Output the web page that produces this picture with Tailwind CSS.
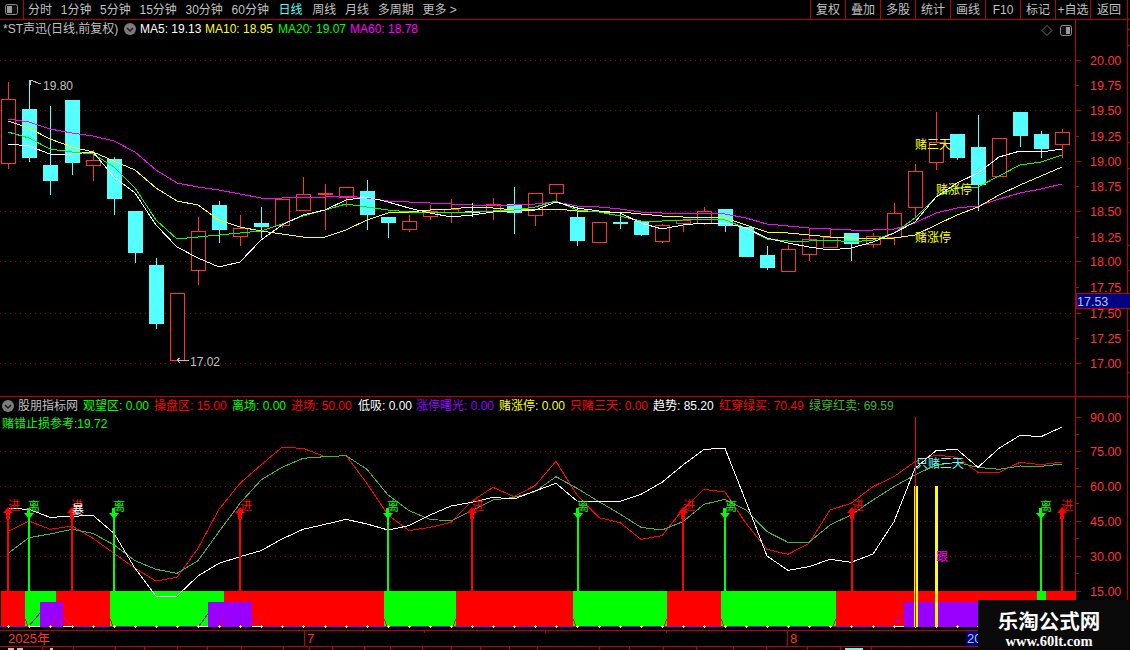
<!DOCTYPE html>
<html lang="zh-CN">
<head>
  <meta charset="UTF-8">
  <title>*ST声迅 日线</title>
  <script src="https://cdn.jsdelivr.net/npm/@tailwindcss/browser@4"></script>
</head>
<body class="bg-black">

<div class="relative w-[1130px] h-[650px] overflow-hidden bg-black flex flex-col text-[12px] leading-none text-[#c0c0c0] font-['Liberation_Sans','Noto_Sans_CJK_SC',sans-serif]">

  <!-- toolbar -->
  <div class="h-5 shrink-0 flex items-center border-b border-[#b80000] whitespace-nowrap pr-[2px]">
    <div class="w-6 h-full shrink-0 flex items-center justify-center border-r border-[#b80000]">
      <svg width="13" height="11" viewBox="0 0 13 11"><rect x="0.5" y="0.5" width="12" height="10" rx="2" fill="#101010" stroke="#8c8c8c"/><rect x="2" y="2" width="5" height="7" fill="#9a9a9a"/></svg>
    </div>
    <div class="flex items-center gap-[8.7px] pl-1">
      <span>分时</span><span>1分钟</span><span>5分钟</span><span>15分钟</span><span>30分钟</span><span>60分钟</span>
      <span class="text-[#54ffff] ml-px">日线</span><span class="ml-px">周线</span><span>月线</span><span>多周期</span><span>更多 &gt;</span>
    </div>
    <div class="ml-auto flex h-full">
      <span class="w-[35px] flex items-center justify-center border-l border-[#b80000]">复权</span>
      <span class="w-[35px] flex items-center justify-center border-l border-[#b80000]">叠加</span>
      <span class="w-[35px] flex items-center justify-center border-l border-[#b80000]">多股</span>
      <span class="w-[35px] flex items-center justify-center border-l border-[#b80000]">统计</span>
      <span class="w-[35px] flex items-center justify-center border-l border-[#b80000]">画线</span>
      <span class="w-[35px] flex items-center justify-center border-l border-[#b80000]">F10</span>
      <span class="w-[35px] flex items-center justify-center border-l border-[#b80000]">标记</span>
      <span class="w-[35px] flex items-center justify-center border-l border-[#b80000]">+自选</span>
      <span class="w-[38px] flex items-center justify-center border-x border-[#b80000]">返回</span>
    </div>
  </div>

  <!-- price panel -->
  <div class="relative h-[377px] shrink-0 border-b border-[#c00000]">
    <svg id="price" class="block" width="1130" height="376" viewBox="0 20 1130 376"></svg>
    <div class="absolute left-[3px] top-0 h-[18px] flex items-center">
      <span class="w-[121px]">*ST声迅(日线,前复权)</span>
      <svg class="mr-[4px]" width="12" height="12" viewBox="0 0 12 12"><circle cx="6" cy="6" r="6" fill="#7c7c7c"/><path d="M3 5l3 3 3-3" fill="none" stroke="#1a1a1a" stroke-width="1.5"/></svg>
      <span class="text-white w-[65px]">MA5: 19.13</span>
      <span class="text-[#ffff00] w-[73px]">MA10: 18.95</span>
      <span class="text-[#00ff00] w-[72px]">MA20: 19.07</span>
      <span class="text-[#ff00ff]">MA60: 18.78</span>
    </div>
  </div>

  <!-- indicator panel -->
  <div class="relative h-[233px] shrink-0">
    <svg id="indicator" class="block" width="1130" height="233" viewBox="0 397 1130 233"></svg>
    <div class="absolute left-[2px] top-0 h-[17px] flex items-center whitespace-nowrap">
      <svg class="mr-[4px]" width="12" height="12" viewBox="0 0 12 12"><circle cx="6" cy="6" r="6" fill="#7c7c7c"/><path d="M3 5l3 3 3-3" fill="none" stroke="#1a1a1a" stroke-width="1.5"/></svg>
      <span class="w-[65px]">股朋指标网</span>
      <span class="text-[#00ff00] w-[71px]">观望区: 0.00</span>
      <span class="text-[#ff0000] w-[78px]">操盘区: 15.00</span>
      <span class="text-[#00ff00] w-[59px]">离场: 0.00</span>
      <span class="text-[#ff0000] w-[67px]">进场: 50.00</span>
      <span class="text-white w-[58px]">低吸: 0.00</span>
      <span class="text-[#9900ff] w-[83px]">涨停曙光: 0.00</span>
      <span class="text-[#ffff00] w-[71px]">赌涨停: 0.00</span>
      <span class="text-[#ff0000] w-[83px]">只赌三天: 0.00</span>
      <span class="text-white w-[66px]">趋势: 85.20</span>
      <span class="text-[#ff0000] w-[90px]">红穿绿买: 70.49</span>
      <span class="text-[#46b432]">绿穿红卖: 69.59</span>
    </div>
    <div class="absolute left-[2px] top-[21px] text-[#00ff00]">赌错止损参考:19.72</div>
  </div>

  <!-- date axis -->
  <div class="relative h-[17px] shrink-0 border-y border-[#c00000] w-[1127px] text-[#ff3232] text-[13px] flex items-center">
    <span class="ml-2 w-[296px]">2025年</span>
    <span class="h-full border-l border-[#c00000] pl-[2px] w-[483px] flex items-center">7</span>
    <span class="h-full border-l border-[#c00000] pl-[2px] w-[179px] flex items-center">8</span>
    <span class="h-full bg-[#000080] text-[#a8c8ff] pl-[1px] w-[14px] flex items-center overflow-hidden">20</span>
    <span class="absolute left-[424px] top-0 h-[2px] w-px bg-[#c00000]"></span>
    <span class="absolute left-[545px] top-0 h-[2px] w-px bg-[#c00000]"></span>
    <span class="absolute left-[666px] top-0 h-[2px] w-px bg-[#c00000]"></span>
  </div>

  <!-- tab strip, only its top edge fits in the window -->
  <svg id="tabs" class="block shrink-0" width="1130" height="3" viewBox="0 647 1130 3"></svg>

  <!-- watermark -->
  <div class="absolute right-0 bottom-0 w-[152px] h-[50px] bg-[#0a0a0a] flex flex-col items-center pr-[10px] text-white">
    <div class="mt-[9px] h-[23px] text-[20.5px] leading-[23px] font-bold font-['Noto_Sans_CJK_SC',sans-serif]">乐淘公式网</div>
    <div class="mt-[2px] text-[14.5px] leading-[15px] font-bold font-['Liberation_Serif',serif]">www.60lt.com</div>
  </div>
</div>

<script>
  const RED = '#ff3232', CYAN = '#54ffff', AXIS = '#c00000', GRID = '#a80000';
  const xAt = i => Math.round(8.3 + 21.08 * i);

  const line = (x1, y1, x2, y2, color, w = 1, dash = '') =>
    `<line x1="${x1}" y1="${y1}" x2="${x2}" y2="${y2}" stroke="${color}" stroke-width="${w}" stroke-dasharray="${dash}" shape-rendering="crispEdges"/>`;
  const rect = (x, y, w, h, fill) =>
    `<rect x="${x}" y="${y}" width="${w}" height="${h}" fill="${fill}" shape-rendering="crispEdges"/>`;
  const text = (x, y, s, fill, size = 12, anchor = 'start') =>
    `<text x="${x}" y="${y}" fill="${fill}" font-size="${size}" text-anchor="${anchor}">${s}</text>`;
  const poly = (pts, color, w = 1) =>
    `<polyline points="${pts.map(p => p.join(',')).join(' ')}" fill="none" stroke="${color}" stroke-width="${w}" shape-rendering="crispEdges"/>`;

  // [body top, body bottom, wick top, wick bottom, color]
  const c = 'c', r = 'r', w = 'w';
  const candles = [
    [99,163,82,169,r],[109,157,80,162,c],[165,180,106,195,c],[100,162,100,175,c],[160,165,150,181,r],
    [159,198,157,215,c],[211,252,211,263,c],[265,323,258,329,c],[293,360,293,360,r],[231,270,217,285,r],
    [205,229,201,243,c],[228,236,215,246,r],[223,226,207,238,c],[199,225,199,228,r],[194,210,177,210,r],
    [193,194,184,230,r],[187,197,187,207,r],[191,214,180,230,c],[217,222,217,238,c],[221,229,215,232,r],
    [211,216,205,220,r],[209,212,199,223,r],[211,212,203,217,w],[204,211,198,220,r],[204,212,187,234,c],
    [193,215,193,226,r],[184,193,184,201,r],[217,240,207,246,c],[222,242,222,242,r],[222,223,212,229,c],
    [221,234,221,236,c],[225,241,224,243,r],[220,223,219,232,r],[211,223,207,225,r],[209,225,209,232,c],
    [227,256,227,257,c],[255,267,246,270,c],[249,271,245,271,r],[239,254,228,261,r],[237,247,228,247,r],
    [233,243,233,261,c],[236,244,233,248,r],[213,237,203,245,r],[171,207,164,217,r],[142,162,112,170,r],
    [134,157,134,160,c],[147,184,115,211,c],[138,176,138,176,r],[112,135,112,147,c],[134,148,131,158,c],
    [132,144,129,158,r]
  ];

  const ma5 = [144,146,154,154,152,177,193,225,247,258,267,262,240,225,215,210,200,197,202,208,213,217,215,212,211,210,202,208,211,213,223,229,225,223,223,228,238,243,247,250,248,242,233,222,197,183,173,157,151,152,149];
  const ma10 = [121,128,139,147,152,161,170,188,201,205,220,227,231,234,237,237,230,220,213,212,210,209,207,208,210,209,209,211,212,212,214,216,217,217,218,225,232,233,235,237,238,239,238,235,225,215,207,195,185,176,167];
  const ma20 = [132,138,149,152,154,167,188,220,239,237,235,233,231,224,216,210,204,207,210,212,213,212,212,211,210,207,201,210,212,216,221,221,220,219,220,228,239,241,241,240,242,240,233,218,197,187,187,176,165,162,155];
  const ma60 = [119,122,129,133,136,141,152,170,183,187,190,194,198,198,197,197,196,198,201,202,203,204,205,205,205,204,202,206,207,209,212,213,214,213,214,218,224,226,228,229,230,230,229,223,213,208,206,199,193,189,184];

  let p = '';
  // grid and price axis
  [60,110,161,211,261,313,363].forEach(y => { p += line(0, y + .5, 1075, y + .5, GRID, 1, '1 4'); });
  const prices = ['20.00','19.75','19.50','19.25','19.00','18.75','18.50','18.25','18.00','17.75','17.50','17.25','17.00'];
  const priceY = [60,85,110,136,161,186,211,237,261,287,313,338,363];
  prices.forEach((s, i) => {
    p += line(1075, priceY[i] + .5, i % 2 ? 1079 : 1081, priceY[i] + .5, AXIS);
    p += text(1090, priceY[i] + 5, s, RED, 12.5);
  });
  p += line(1075.5, 20, 1075.5, 396, AXIS) + line(1127.5, 20, 1127.5, 396, AXIS);
  [29,45,142,168,245,270,300,330,372].forEach(y => { p += line(1127, y + .5, 1130, y + .5, AXIS); });

  candles.forEach((k, i) => {
    const x = xAt(i), color = k[4] === 'r' ? RED : k[4] === 'c' ? CYAN : '#ffffff';
    p += line(x + .5, k[2], x + .5, k[3], color);
    if (k[4] === 'r' && k[1] - k[0] > 2) {
      p += `<rect x="${x - 6.5}" y="${k[0] + .5}" width="14" height="${k[1] - k[0]}" fill="#000" stroke="${color}" shape-rendering="crispEdges"/>`;
    } else {
      p += rect(x - 7, k[0], 15, k[1] - k[0] + 1, color);
    }
  });

  p += poly(ma60.map((y, i) => [xAt(i), y]), '#ff00ff');
  p += poly(ma10.map((y, i) => [xAt(i), y]), '#ffff00');
  p += poly(ma20.map((y, i) => [xAt(i), y]), '#00ff00');
  p += poly(ma5.map((y, i) => [xAt(i), y]), '#ffffff');

  // high, low and signal labels
  p += poly([[30,80],[30,85]], '#c0c0c0') + poly([[30,80],[41,84]], '#c0c0c0');
  p += text(43, 90, '19.80', '#c0c0c0');
  p += line(177, 360.5, 189, 360.5, '#c0c0c0') + poly([[180,358],[177,360],[180,363]], '#c0c0c0');
  p += text(190, 366, '17.02', '#c0c0c0');
  p += text(915, 149, '赌三天', '#ffff00') + text(936, 194, '赌涨停', '#ffff00') + text(915, 242, '赌涨停', '#ffff00');

  // corner controls
  p += `<polygon points="1047,25.5 1052,30.5 1047,35.5 1042,30.5" fill="none" stroke="#707070"/>`;
  p += `<rect x="1060.5" y="25.5" width="11" height="10" rx="2" fill="#101010" stroke="#8c8c8c"/>` + rect(1066, 27, 4, 7, '#9a9a9a');

  // last price tag
  p += `<rect x="1076" y="293.5" width="54" height="15" fill="#000080" stroke="#c00000" shape-rendering="crispEdges"/>`;
  p += text(1077, 306, '17.53', '#a8c8ff', 12.5);
  document.getElementById('price').innerHTML = p;

  // indicator panel
  const z1 = v => 440 + v / 3, z2 = v => 420 + v / 3;
  const series = (a, b) => a.map(z1).concat(b.map(z2)).map((y, i) => [xAt(i), y]);
  const trend = series(
    [205,208,232,229,226,280,385,468,468,408,370,350,332,297,268,253,238,252,270,257,225,198,187,172,177],
    [213,190,243,244,244,223,187,135,88,85,245,408,451,440,418,427,402,305,145,92,88,142,85,46,50,21]);
  const redLine = series(
    [275,243,268,258,295,340,385,423,412,325,208,130,75,22,25,50,47,130,225,272,262,247,183,142,170],
    [197,124,225,293,308,358,347,268,208,216,310,388,403,370,270,250,200,170,125,105,112,157,157,127,134,126]);
  const greenLine = series(
    [340,293,282,268,280,315,362,388,400,362,275,190,120,82,55,50,47,88,165,212,238,243,212,180,172],
    [215,170,205,245,282,322,330,305,253,238,270,335,367,367,315,285,240,200,165,135,127,142,148,138,139,132]);

  let q = '';
  [451,486,521,556].forEach(y => { q += line(0, y + .5, 1075, y + .5, GRID, 1, '1 4'); });
  ['90.00','75.00','60.00','45.00','30.00','15.00'].forEach((s, i) => {
    const y = [417,451,486,521,556,591][i];
    q += line(1075, y + .5, 1081, y + .5, AXIS);
    if (i < 5) q += line(1075, y + 17.5, 1079, y + 17.5, AXIS);
    q += text(1090, y + 5, s, RED, 12.5);
  });
  q += line(1075.5, 397, 1075.5, 630, AXIS) + line(1127.5, 397, 1127.5, 630, AXIS);

  // zone blocks along the bottom
  [[1,25,'#ff0000'],[25,56,'#00ff00'],[56,110,'#ff0000'],[110,224,'#00ff00'],[224,384,'#ff0000'],[384,456,'#00ff00'],
   [456,573,'#ff0000'],[573,667,'#00ff00'],[667,721,'#ff0000'],[721,836,'#00ff00'],[836,1037,'#ff0000'],[1037,1046,'#00ff00'],[1046,1076,'#ff0000']]
    .forEach(b => { q += rect(b[0], 591, b[1] - b[0], 36, b[2]); });
  [[40,63],[208,252],[904,1040]].forEach(b => { q += rect(b[0], 602, b[1] - b[0], 25, '#9900ff'); });
  q += rect(0, 626, 1075, 1, '#9900ff');
  [[29,40],[63,72],[199,208],[252,261],[893,904]].forEach(b => { q += rect(b[0], 626, b[1] - b[0], 1, '#ffffff'); });
  q += poly([[29,626],[40,613]], '#9900ff') + poly([[63,617],[72,626]], '#9900ff') + poly([[199,626],[208,614]], '#9900ff');
  q += poly([[252,617],[261,626]], '#9900ff') + poly([[893,626],[904,614]], '#9900ff');
  [25,110,384,573,721].forEach(x => { q += poly([[x,619],[x + 3,626]], '#ff0000'); });
  [56,224,456,667,836].forEach(x => { q += poly([[x,619],[x - 3,626]], '#ff0000'); });
  for (let i = 0; i < 51; i++) {
    const x = xAt(i);
    q += rect(x - 1, 626, 3, 1, '#ffff00') + rect(x, 625, 1, 3, '#ffff00');
  }

  q += poly(redLine, '#ff0000') + poly(greenLine, '#46b432') + poly(trend, '#ffffff');

  // entry and exit arrows
  const up = x => rect(x - 1, 512, 2, 79, '#ff0000') + rect(x - 2, 512, 4, 7, '#ff0000') + `<polygon points="${x},507 ${x + 5},513 ${x - 5},513" fill="#ff0000"/>`;
  const down = x => rect(x - 1, 509, 2, 82, '#00ff00') + rect(x - 2, 508, 3, 6, '#00ff00') + `<polygon points="${x},519 ${x + 5},513 ${x - 5},513" fill="#00ff00"/>`;
  [8,72,240,472,683,852,1062].forEach(x => { q += up(x); });
  [29,114,388,578,725,1041].forEach(x => { q += down(x); });
  [14,246,478,689,858,1067].forEach(x => { q += text(x, 510, '进', '#ff0000', 12, 'middle'); });
  [34,119,393,583,731,1046].forEach(x => { q += text(x, 511, '离', '#00ff00', 12, 'middle'); });
  q += text(77, 510, '进', '#ff0000', 12, 'middle') + text(78, 514, '暴', '#ffffff', 12, 'middle');

  // yellow bars
  q += rect(914, 486, 4, 141, '#ffff00') + rect(935, 486, 3, 141, '#ffff00');
  q += line(915.5, 417, 915.5, 627, '#ff0000');
  q += text(916, 468, '只赌三天', CYAN) + text(936, 561, '跟', '#ff00ff');
  document.getElementById('indicator').innerHTML = q;

  // tab strip
  let t = '';
  [42,73,115,144,177,207,241,283,309,332,364,390,422,451,480,509,537,599,629,663,696,733,766,807,840,871]
    .forEach(x => { t += line(x + .5, 647, x + .5, 650, AXIS); });
  t += rect(8, 648, 6, 2, '#c0c0c0') + rect(17, 648, 6, 2, '#c0c0c0') + rect(50, 648, 3, 2, '#c0c0c0') + rect(845, 648, 18, 2, CYAN);
  document.getElementById('tabs').innerHTML = t;
</script>

</body>
</html>
